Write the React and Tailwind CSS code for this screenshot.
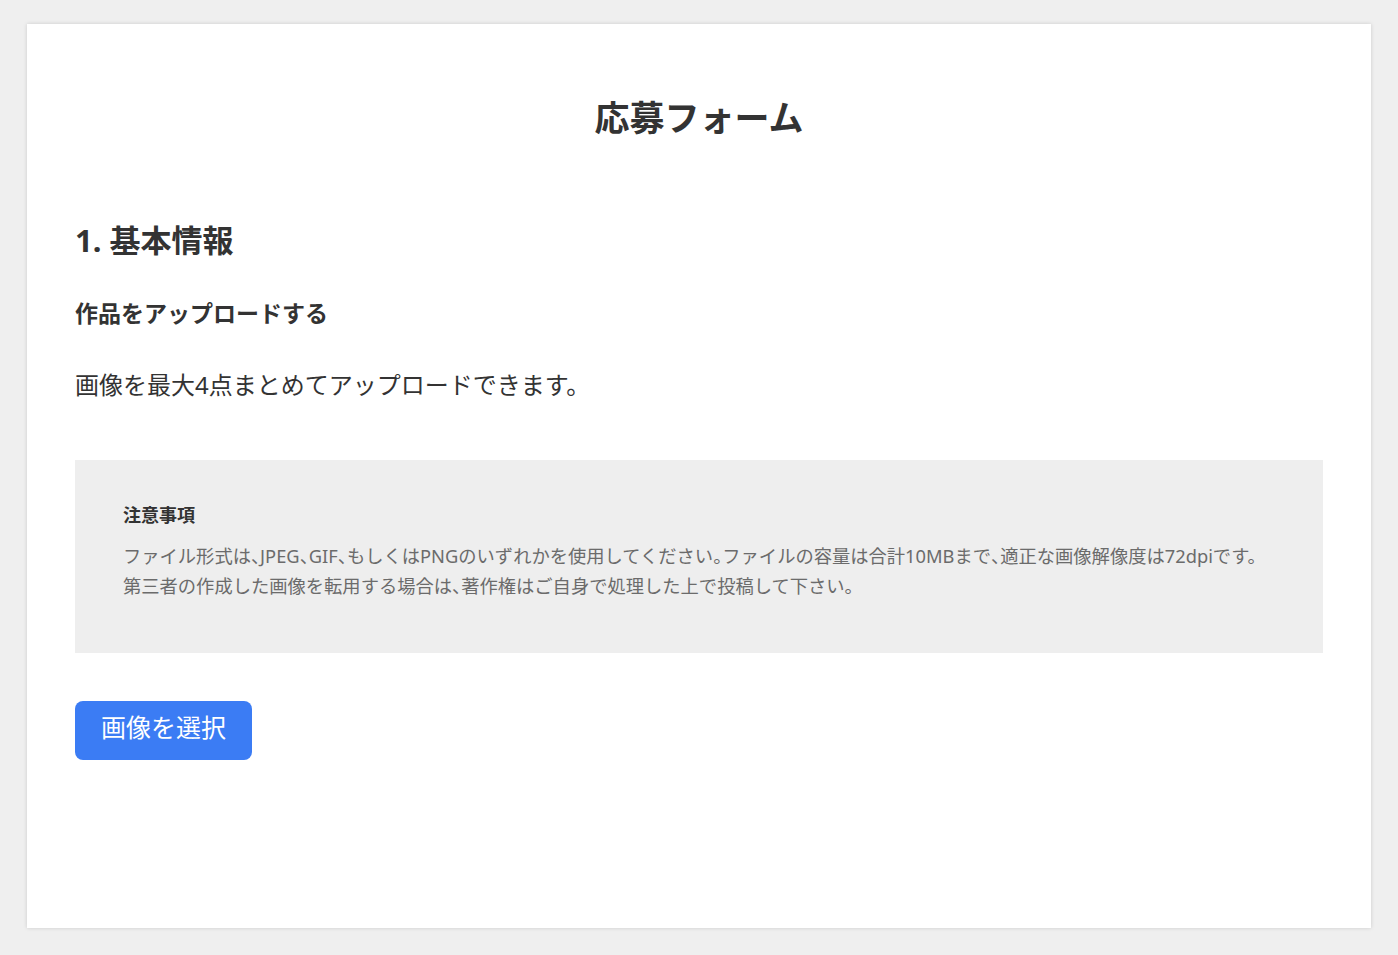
// 句読点を半角幅に詰める
function Tight({ text }) {
  const parts = text.split(/([、。])/);
  return parts.map((p, i) =>
    p === '、' || (p === '。' && i < parts.length - 2) ? (
      <span key={i} className="[font-feature-settings:'halt']">{p}</span>
    ) : (
      p
    )
  );
}

export default function App() {
  return (
    <div
      className="min-h-screen bg-[#efefef] px-[27px] pt-[24px] pb-[27px] text-[#333333]"
      style={{ fontFamily: '"Noto Sans", "Noto Sans CJK JP", sans-serif' }}
    >
      <div className="bg-white shadow-[0_0_4px_rgba(0,0,0,0.15)] px-[48px] pt-[67px] pb-[168px]">
        <h1 className="text-center text-[35px] leading-[54px] font-bold">応募フォーム</h1>

        <h2 className="mt-[71px] text-[31px] leading-[48px] font-bold">1. 基本情報</h2>

        <h3 className="mt-[31px] text-[23px] leading-[36px] font-bold">作品をアップロードする</h3>

        <p className="mt-[36px] text-[24px] leading-[36px]">
          画像を最大4点まとめてアップロードできます。
        </p>

        <div className="mt-[57px] bg-[#eeeeee] px-[48px] pt-[41px] pb-[52px]">
          <h4 className="text-[18px] leading-[28px] font-bold">注意事項</h4>
          <p className="mt-[12px] whitespace-nowrap text-[18.3px] leading-[30px] text-[#6b6b6b]">
            <Tight text="ファイル形式は、JPEG、GIF、もしくはPNGのいずれかを使用してください。ファイルの容量は合計10MBまで、適正な画像解像度は72dpiです。" />
            <br />
            <Tight text="第三者の作成した画像を転用する場合は、著作権はご自身で処理した上で投稿して下さい。" />
          </p>
        </div>

        <button className="mt-[48px] flex h-[59px] w-[177px] items-center justify-center rounded-[8px] bg-[#3b7cf4] pb-[6px] text-[25px] text-white">
          画像を選択
        </button>
      </div>
    </div>
  );
}
